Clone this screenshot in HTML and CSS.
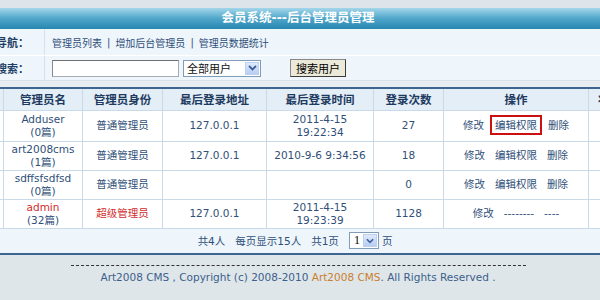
FILE: index.html
```html
<!DOCTYPE html>
<html lang="zh-CN">

<head>
    <meta charset="UTF-8">
    <title>会员系统---后台管理员管理</title>
    <link rel="stylesheet" href="styles.css">
</head>

<body>
    <div class="page">
        <div class="topband"></div>
        <div class="titlebar">会员系统---后台管理员管理</div>

        <div class="formrow">
            <div class="label">导航：</div>
            <div class="field nav">
                <a href="#">管理员列表</a><span class="sep">|</span><a href="#">增加后台管理员</a><span class="sep">|</span><a href="#">管理员数据统计</a>
            </div>
        </div>
        <div class="formrow search">
            <div class="label">搜索：</div>
            <div class="field">
                <input type="text" class="keyword">
                <span class="fake-select wide">
                    <span class="sel-text">全部用户</span>
                    <span class="sel-btn"><svg width="9" height="6" viewBox="0 0 9 6"><path d="M1 1 L4.5 4.5 L8 1" fill="none" stroke="#3d5f9a" stroke-width="1.8"/></svg></span>
                </span>
                <button class="btn">搜索用户</button>
            </div>
        </div>
        <div class="spacer"></div>

        <table class="list">
            <colgroup>
                <col style="width:43px">
                <col style="width:79px">
                <col style="width:80px">
                <col style="width:104px">
                <col style="width:107px">
                <col style="width:70px">
                <col style="width:145px">
                <col style="width:48px">
            </colgroup>
            <thead>
                <tr>
                    <th></th>
                    <th>管理员名</th>
                    <th>管理员身份</th>
                    <th>最后登录地址</th>
                    <th>最后登录时间</th>
                    <th>登录次数</th>
                    <th>操作</th>
                    <th class="edge">状态</th>
                </tr>
            </thead>
            <tbody>
                <tr>
                    <td></td>
                    <td>Adduser<br>(0篇)</td>
                    <td>普通管理员</td>
                    <td>127.0.0.1</td>
                    <td>2011-4-15<br>19:22:34</td>
                    <td>27</td>
                    <td class="ops"><a href="#">修改</a><a href="#" class="marked">编辑权限</a><a href="#">删除</a></td>
                    <td></td>
                </tr>
                <tr>
                    <td></td>
                    <td>art2008cms<br>(1篇)</td>
                    <td>普通管理员</td>
                    <td>127.0.0.1</td>
                    <td class="nowrap">2010-9-6 9:34:56</td>
                    <td>18</td>
                    <td class="ops"><a href="#">修改</a><a href="#">编辑权限</a><a href="#">删除</a></td>
                    <td></td>
                </tr>
                <tr>
                    <td></td>
                    <td>sdffsfsdfsd<br>(0篇)</td>
                    <td>普通管理员</td>
                    <td></td>
                    <td></td>
                    <td>0</td>
                    <td class="ops"><a href="#">修改</a><a href="#">编辑权限</a><a href="#">删除</a></td>
                    <td></td>
                </tr>
                <tr>
                    <td></td>
                    <td><span class="red">admin</span><br>(32篇)</td>
                    <td class="red">超级管理员</td>
                    <td>127.0.0.1</td>
                    <td>2011-4-15<br>19:23:39</td>
                    <td>1128</td>
                    <td class="ops"><a href="#">修改</a><span>--------</span><span>----</span></td>
                    <td></td>
                </tr>
            </tbody>
        </table>

        <div class="pager">
            <span>共4人</span>
            <span>每页显示15人</span>
            <span>共1页</span>
            <span class="fake-select small">
                <span class="sel-num">1</span>
                <span class="sel-btn"><svg width="8" height="6" viewBox="0 0 9 6"><path d="M1 1 L4.5 4.5 L8 1" fill="none" stroke="#3d5f9a" stroke-width="1.8"/></svg></span>
            </span>
            <span>页</span>
        </div>

        <div class="footer">
            <div class="dash"></div>
            <p>Art2008 CMS , Copyright (c) 2008-2010 <span class="brand">Art2008 CMS</span>. All Rights Reserved .</p>
        </div>
    </div>
</body>

</html>
```

FILE: styles.css
```css
* {
    margin: 0;
    padding: 0;
    box-sizing: border-box;
}

body {
    font-family: "DejaVu Sans", "Noto Sans CJK SC", sans-serif;
    font-size: 10.5px;
    color: #2f4f78;
    background-color: #dfe6ea;
    overflow: hidden;
}

a {
    color: #2f4f78;
    text-decoration: none;
}

.page {
    width: 676px;
    margin-left: -40px;
}

.topband {
    height: 8px;
    background-color: #dde5ea;
}

.titlebar {
    height: 21px;
    line-height: 20px;
    text-align: center;
    color: #ffffff;
    font-size: 12.5px;
    font-weight: bold;
    background: linear-gradient(#a3d6ea, #4fa6ca 50%, #2786b0);
}

/* Nav and search rows */
.formrow {
    display: grid;
    grid-template-columns: 85px 1fr;
    height: 27px;
    background-color: #eef5fb;
    border-bottom: 1px solid #ffffff;
}

.formrow.search {
    height: 25px;
    border-bottom: 1px solid #d7e2eb;
}

.label {
    display: flex;
    align-items: center;
    justify-content: flex-end;
    padding-right: 15px;
    font-weight: bold;
    font-size: 11px;
    color: #1f3f66;
    border-right: 1px solid #d6e3ee;
}

.field {
    display: flex;
    align-items: center;
    padding-left: 7px;
}

.field.nav {
    font-size: 10px;
}

.sep {
    margin: 0 5px;
}

.keyword {
    width: 127px;
    height: 17px;
    border: 1px solid #a5acb5;
    border-top-color: #707070;
    border-left-color: #8a8a8a;
    background: #ffffff;
}

.fake-select {
    display: inline-flex;
    align-items: center;
    background: #ffffff;
    border: 1px solid #7f9db9;
}

.fake-select.wide {
    width: 78px;
    height: 17px;
    margin-left: 4px;
    justify-content: space-between;
    padding: 1px;
}

.sel-text {
    font-size: 11px;
    color: #111111;
    padding-left: 2px;
}

.sel-btn {
    display: flex;
    align-items: center;
    justify-content: center;
    width: 14px;
    height: 100%;
    border: 1px solid #bcd0f2;
    background: linear-gradient(#dfe9fb, #b8cdf4);
}

.btn {
    margin-left: 29px;
    width: 56px;
    height: 18px;
    font-family: inherit;
    font-size: 11px;
    color: #000000;
    background: #ece9d8;
    border: 1px solid #3c3c3c;
    border-top-color: #888888;
    border-left-color: #888888;
}

.spacer {
    height: 6px;
    background-color: #e7edf1;
}

/* Admin table */
.list {
    width: 676px;
    table-layout: fixed;
    border-collapse: collapse;
    background-color: #ffffff;
    border-top: 2px solid #3c6690;
}

.list th {
    height: 22px;
    font-size: 11.5px;
    font-weight: bold;
    color: #1e3a60;
    background-color: #e4eef7;
    border-left: 1px solid #c9d9e7;
    border-bottom: 1px solid #c9d9e7;
}

.list th.edge {
    text-align: left;
    padding-left: 9px;
    white-space: nowrap;
}

.list td {
    height: 29px;
    padding: 1px 0;
    line-height: 13px;
    text-align: center;
    border-left: 1px solid #c9d9e7;
    border-bottom: 1px solid #c9d9e7;
    overflow: hidden;
}

.list tbody tr:first-child td {
    height: 31px;
}

.nowrap {
    white-space: nowrap;
}

.red,
.red a {
    color: #d22b2b;
}

.ops a,
.ops span {
    margin: 0 5px;
}

.ops .marked {
    display: inline-block;
    padding: 0 1px;
    line-height: 12px;
    outline: 2px solid #cc1010;
    outline-offset: 2px;
}

/* Pager */
.pager {
    display: flex;
    align-items: center;
    justify-content: center;
    gap: 10px;
    height: 26px;
    padding-right: 6px;
    background-color: #eef5fb;
    border-bottom: 2px solid #3c6690;
}

.fake-select.small {
    width: 30px;
    height: 17px;
    padding: 1px;
    justify-content: space-between;
    margin-right: -7px;
}

.sel-num {
    font-family: "Liberation Serif", serif;
    font-size: 12px;
    color: #000000;
    padding-left: 3px;
}

/* Footer */
.footer {
    padding-top: 10px;
    text-align: center;
}

.dash {
    width: 455px;
    margin: 0 auto;
    border-top: 1px dashed #333333;
}

.footer p {
    margin-top: 5px;
    font-size: 10.5px;
    color: #3b5f8a;
}

.brand {
    color: #c97f2c;
}
```
